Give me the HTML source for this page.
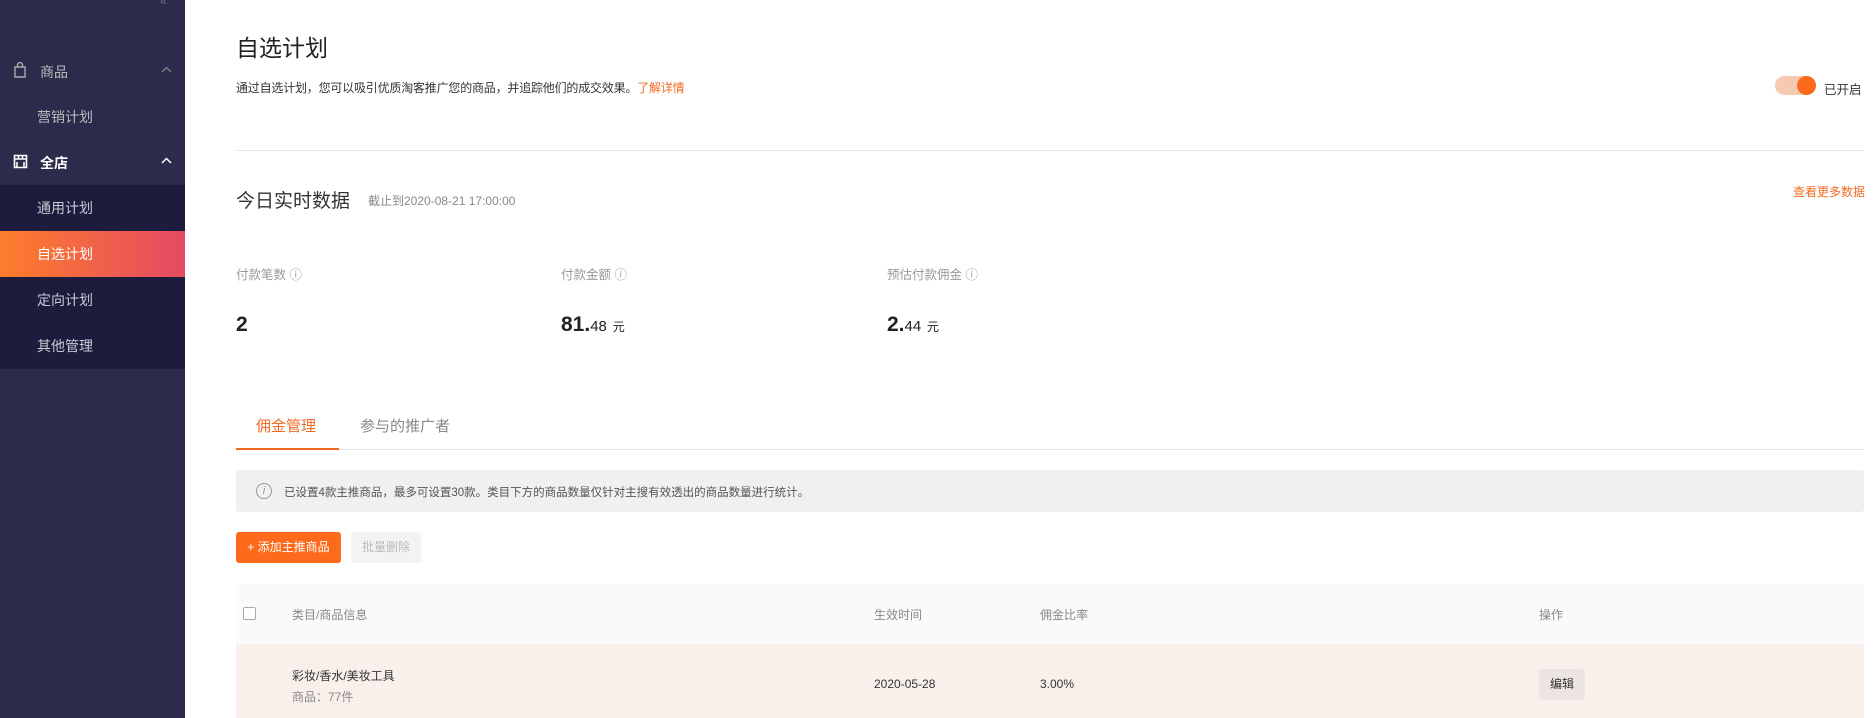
<!DOCTYPE html>
<html><head><meta charset="utf-8"><style>
*{margin:0;padding:0;box-sizing:border-box}
body{width:1875px;height:718px;overflow:hidden;background:#fff;font-family:"Liberation Sans","Noto Sans CJK SC",sans-serif;color:#333;position:relative}
.abs{position:absolute;white-space:nowrap}
.side{position:absolute;left:0;top:0;width:185px;height:718px;background:#2c2b4c}
.sub{position:absolute;left:0;top:185px;width:185px;height:184px;background:#1d1c3d}
.si{position:absolute;left:0;width:185px;height:46px;line-height:46px;padding-left:37px;font-size:14px;color:#c8c8d4}
.act{background:linear-gradient(90deg,#fe7d2c,#e44a62);color:#fff}
</style></head><body>
<div class="side">
<div class="abs" style="left:160px;top:-6px;color:#777;font-size:12px">«</div>
<svg class="abs" style="left:13px;top:62px" width="14" height="16" viewBox="0 0 14 16"><path d="M2 5h10v10H2zM4.5 5V3a2.5 2.5 0 0 1 5 0v2" fill="none" stroke="#aaa" stroke-width="1.4"/></svg>
<div class="abs" style="left:40px;top:62px;font-size:14px;color:#bbb">商品</div>
<svg class="abs" style="left:161px;top:66px" width="11" height="7" viewBox="0 0 11 7"><path d="M1 6l4.5-4.5L10 6" fill="none" stroke="#888" stroke-width="1.2"/></svg>
<div class="abs" style="left:37px;top:107px;font-size:14px;color:#bbb">营销计划</div>
<svg class="abs" style="left:13px;top:154px" width="15" height="15" viewBox="0 0 15 15"><path d="M1.5 1.5h12v12h-12zM1.5 5h12M5.5 1.5v3.5M9.5 1.5v3.5M4 8v5.5M11 8v5.5" fill="none" stroke="#fff" stroke-width="1.6"/></svg>
<div class="abs" style="left:40px;top:153px;font-size:14px;color:#fff;font-weight:bold">全店</div>
<svg class="abs" style="left:161px;top:157px" width="11" height="7" viewBox="0 0 11 7"><path d="M1 6l4.5-4.5L10 6" fill="none" stroke="#fff" stroke-width="1.5"/></svg>
<div class="sub"></div>
<div class="si" style="top:185px">通用计划</div>
<div class="si act" style="top:231px">自选计划</div>
<div class="si" style="top:277px">定向计划</div>
<div class="si" style="top:323px">其他管理</div>
</div>

<div class="abs" style="left:236px;top:29px;font-size:23px;color:#222">自选计划</div>
<div class="abs" style="left:236px;top:79px;font-size:12px;letter-spacing:-0.2px;color:#333">通过自选计划，您可以吸引优质淘客推广您的商品，并追踪他们的成交效果。<span style="color:#f26a22">了解详情</span></div>
<div class="abs" style="left:1775px;top:76px;width:41px;height:19px;border-radius:10px;background:#f6c9b2"></div>
<div class="abs" style="left:1797px;top:76px;width:19px;height:19px;border-radius:50%;background:#fd6a1b"></div>
<div class="abs" style="left:1824px;top:79px;font-size:12.5px;color:#333">已开启</div>
<div class="abs" style="left:236px;top:150px;width:1628px;height:1px;background:#e6e6e6"></div>

<div class="abs" style="left:236px;top:186px;font-size:19px;color:#333">今日实时数据</div>
<div class="abs" style="left:368px;top:192px;font-size:12px;color:#888">截止到2020-08-21 17:00:00</div>
<div class="abs" style="left:1793px;top:183px;font-size:12px;color:#f26a22">查看更多数据</div>

<div class="abs" style="left:236px;top:264px;font-size:12.5px;color:#999">付款笔数 ⓘ</div>
<div class="abs" style="left:561px;top:264px;font-size:12.5px;color:#999">付款金额 ⓘ</div>
<div class="abs" style="left:887px;top:264px;font-size:12.5px;color:#999">预估付款佣金 ⓘ</div>
<div class="abs" style="left:236px;top:313px;font-size:21px;font-weight:bold;color:#222">2</div>
<div class="abs" style="left:561px;top:313px;font-size:21px;font-weight:bold;color:#222">81.<span style="font-size:15px;font-weight:normal">48</span> <span style="font-size:12px;font-weight:normal">元</span></div>
<div class="abs" style="left:887px;top:313px;font-size:21px;font-weight:bold;color:#222">2.<span style="font-size:15px;font-weight:normal">44</span> <span style="font-size:12px;font-weight:normal">元</span></div>

<div class="abs" style="left:256px;top:415px;font-size:15px;color:#f26a22">佣金管理</div>
<div class="abs" style="left:360px;top:415px;font-size:15px;color:#888">参与的推广者</div>
<div class="abs" style="left:236px;top:449px;width:1628px;height:1px;background:#e3e3e3"></div>
<div class="abs" style="left:236px;top:448px;width:103px;height:2px;background:#f26a22"></div>

<div class="abs" style="left:236px;top:470px;width:1628px;height:42px;background:#f0f0f0;border-radius:3px"></div>
<div class="abs" style="left:256px;top:483px;width:16px;height:16px;border:1px solid #999;border-radius:50%;font-size:11px;line-height:14px;text-align:center;color:#999;font-style:italic">i</div>
<div class="abs" style="left:284px;top:484px;font-size:11.5px;color:#555">已设置4款主推商品，最多可设置30款。类目下方的商品数量仅针对主搜有效透出的商品数量进行统计。</div>

<div class="abs" style="left:236px;top:532px;width:105px;height:31px;border-radius:3px;background:#fd6a1b;color:#fff;font-size:12px;line-height:31px;text-align:center">+ 添加主推商品</div>
<div class="abs" style="left:351px;top:532px;width:70px;height:31px;border-radius:3px;background:#f3f3f3;color:#bbb;font-size:12px;line-height:31px;text-align:center">批量删除</div>

<div class="abs" style="left:236px;top:584px;width:1628px;height:60px;background:#fafafa"></div>
<div class="abs" style="left:243px;top:607px;width:13px;height:13px;border:1px solid #aaa;border-radius:2px;background:#fff"></div>
<div class="abs" style="left:292px;top:606px;font-size:12px;color:#888">类目/商品信息</div>
<div class="abs" style="left:874px;top:606px;font-size:12px;color:#888">生效时间</div>
<div class="abs" style="left:1040px;top:606px;font-size:12px;color:#888">佣金比率</div>
<div class="abs" style="left:1539px;top:606px;font-size:12px;color:#888">操作</div>

<div class="abs" style="left:236px;top:644px;width:1628px;height:74px;background:#f9f0ec"></div>
<div class="abs" style="left:292px;top:667px;font-size:12px;color:#333">彩妆/香水/美妆工具</div>
<div class="abs" style="left:292px;top:688px;font-size:12px;color:#888">商品：77件</div>
<div class="abs" style="left:874px;top:677px;font-size:12px;color:#333">2020-05-28</div>
<div class="abs" style="left:1040px;top:677px;font-size:12px;color:#333">3.00%</div>
<div class="abs" style="left:1539px;top:669px;width:46px;height:31px;border-radius:3px;background:#ece5e2;font-size:12px;line-height:31px;text-align:center;color:#333">编辑</div>
</body></html>
